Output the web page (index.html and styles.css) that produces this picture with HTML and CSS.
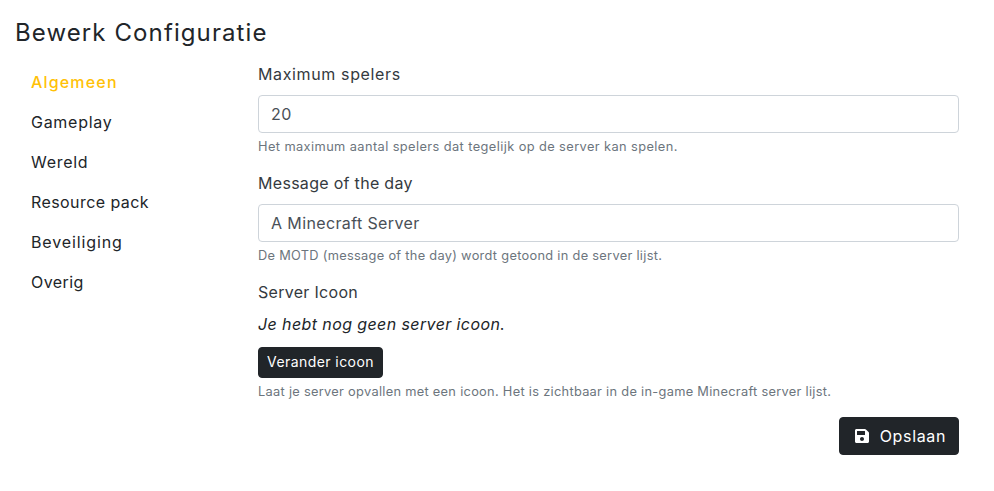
FILE: index.html
```html
<!DOCTYPE html>
<html lang="nl">
<head>
<meta charset="utf-8">
<title>Bewerk Configuratie</title>
<link rel="stylesheet" href="styles.css">
</head>
<body>
<div class="page">
  <h1 class="title">Bewerk Configuratie</h1>
  <div class="layout">
    <nav class="side">
      <a class="side-link active">Algemeen</a>
      <a class="side-link">Gameplay</a>
      <a class="side-link">Wereld</a>
      <a class="side-link narrow">Resource pack</a>
      <a class="side-link wide">Beveiliging</a>
      <a class="side-link narrow">Overig</a>
    </nav>
    <form class="main">
      <div class="group">
        <label class="label wide-label">Maximum spelers</label>
        <div class="input">20</div>
        <small class="help wide-help">Het maximum aantal spelers dat tegelijk op de server kan spelen.</small>
      </div>
      <div class="group">
        <label class="label">Message of the day</label>
        <div class="input">A Minecraft Server</div>
        <small class="help">De MOTD (message of the day) wordt getoond in de server lijst.</small>
      </div>
      <div class="group group-last">
        <label class="label">Server Icoon</label>
        <p class="none">Je hebt nog geen server icoon.</p>
        <span class="btn btn-sm">Verander icoon</span>
        <small class="help">Laat je server opvallen met een icoon. Het is zichtbaar in de in-game Minecraft server lijst.</small>
      </div>
      <div class="actions">
        <span class="btn btn-save">
          <svg class="icon" viewBox="0 0 448 512" aria-hidden="true"><path fill="currentColor" d="M433.941 129.941l-83.882-83.882A48 48 0 0 0 316.118 32H48C21.49 32 0 53.49 0 80v352c0 26.51 21.49 48 48 48h352c26.51 0 48-21.49 48-48V163.882a48 48 0 0 0-14.059-33.941zM224 416c-35.346 0-64-28.654-64-64 0-35.346 28.654-64 64-64s64 28.654 64 64c0 35.346-28.654 64-64 64zm96-304.52V212c0 6.627-5.373 12-12 12H76c-6.627 0-12-5.373-12-12V108c0-6.627 5.373-12 12-12h228.52c3.183 0 6.235 1.264 8.485 3.515l3.48 3.48A11.996 11.996 0 0 1 320 111.48z"/></svg>
          <span>Opslaan</span>
        </span>
      </div>
    </form>
  </div>
</div>
</body>
</html>
```
FILE: styles.css
```css
* { box-sizing: border-box; }
html, body { margin: 0; padding: 0; }
body {
  font-family: Inter, "Liberation Sans", sans-serif;
  font-size: 16px;
  line-height: 24px;
  color: #212529;
  background: #fff;
}
.page { width: 974px; padding-top: 18px; }
.title {
  margin: 0 0 15px 15px;
  font-size: 24px;
  line-height: 29px;
  font-weight: 400;
  letter-spacing: 1.1px;
}
.layout { display: flex; }
.side { width: 243px; flex: none; display: flex; flex-direction: column; padding-left: 15px; }
.side-link {
  display: block;
  padding: 8px 16px;
  line-height: 24px;
  font-weight: 420;
  letter-spacing: 0.72px;
  color: #212529;
}
.side-link.wide { letter-spacing: 0.87px; }
.side-link.narrow { letter-spacing: 0.42px; }
.side-link.active { color: #ffc107; letter-spacing: 1.17px; font-weight: 450; }
.main { flex: 1; padding: 1px 15px 0; }
.group { margin-bottom: 16px; }
.group-last { margin-bottom: 15px; }
.label { display: block; line-height: 22px; margin-bottom: 10px; letter-spacing: 0.3px; font-weight: 400; color: #343a40; }
.wide-label { letter-spacing: 0.63px; }
.input {
  height: 38px;
  padding: 6px 12px;
  border: 1px solid #ced4da;
  border-radius: 4px;
  color: #495057;
  letter-spacing: 0.38px;
}
.help {
  display: block;
  margin-top: 4px;
  font-size: 12.8px;
  line-height: 19.2px;
  color: #6c757d;
  letter-spacing: 0.3px;
}
.wide-help { letter-spacing: 0.41px; }
.none { margin: 0 0 12px; line-height: 22px; font-style: italic; letter-spacing: 0.4px; }
.btn {
  display: inline-flex;
  align-items: center;
  background: #212529;
  color: #fff;
  border: 1px solid #212529;
  border-radius: 4px;
  white-space: nowrap;
}
.btn-sm { padding: 3px 8px 5px; font-size: 14px; line-height: 21px; letter-spacing: 0.43px; vertical-align: top; }
.btn-save { padding: 6px 12px 6px 15px; gap: 11px; letter-spacing: 0.64px; }
.icon { width: 14px; height: 16px; display: block; }
.actions { display: flex; justify-content: flex-end; }
```
